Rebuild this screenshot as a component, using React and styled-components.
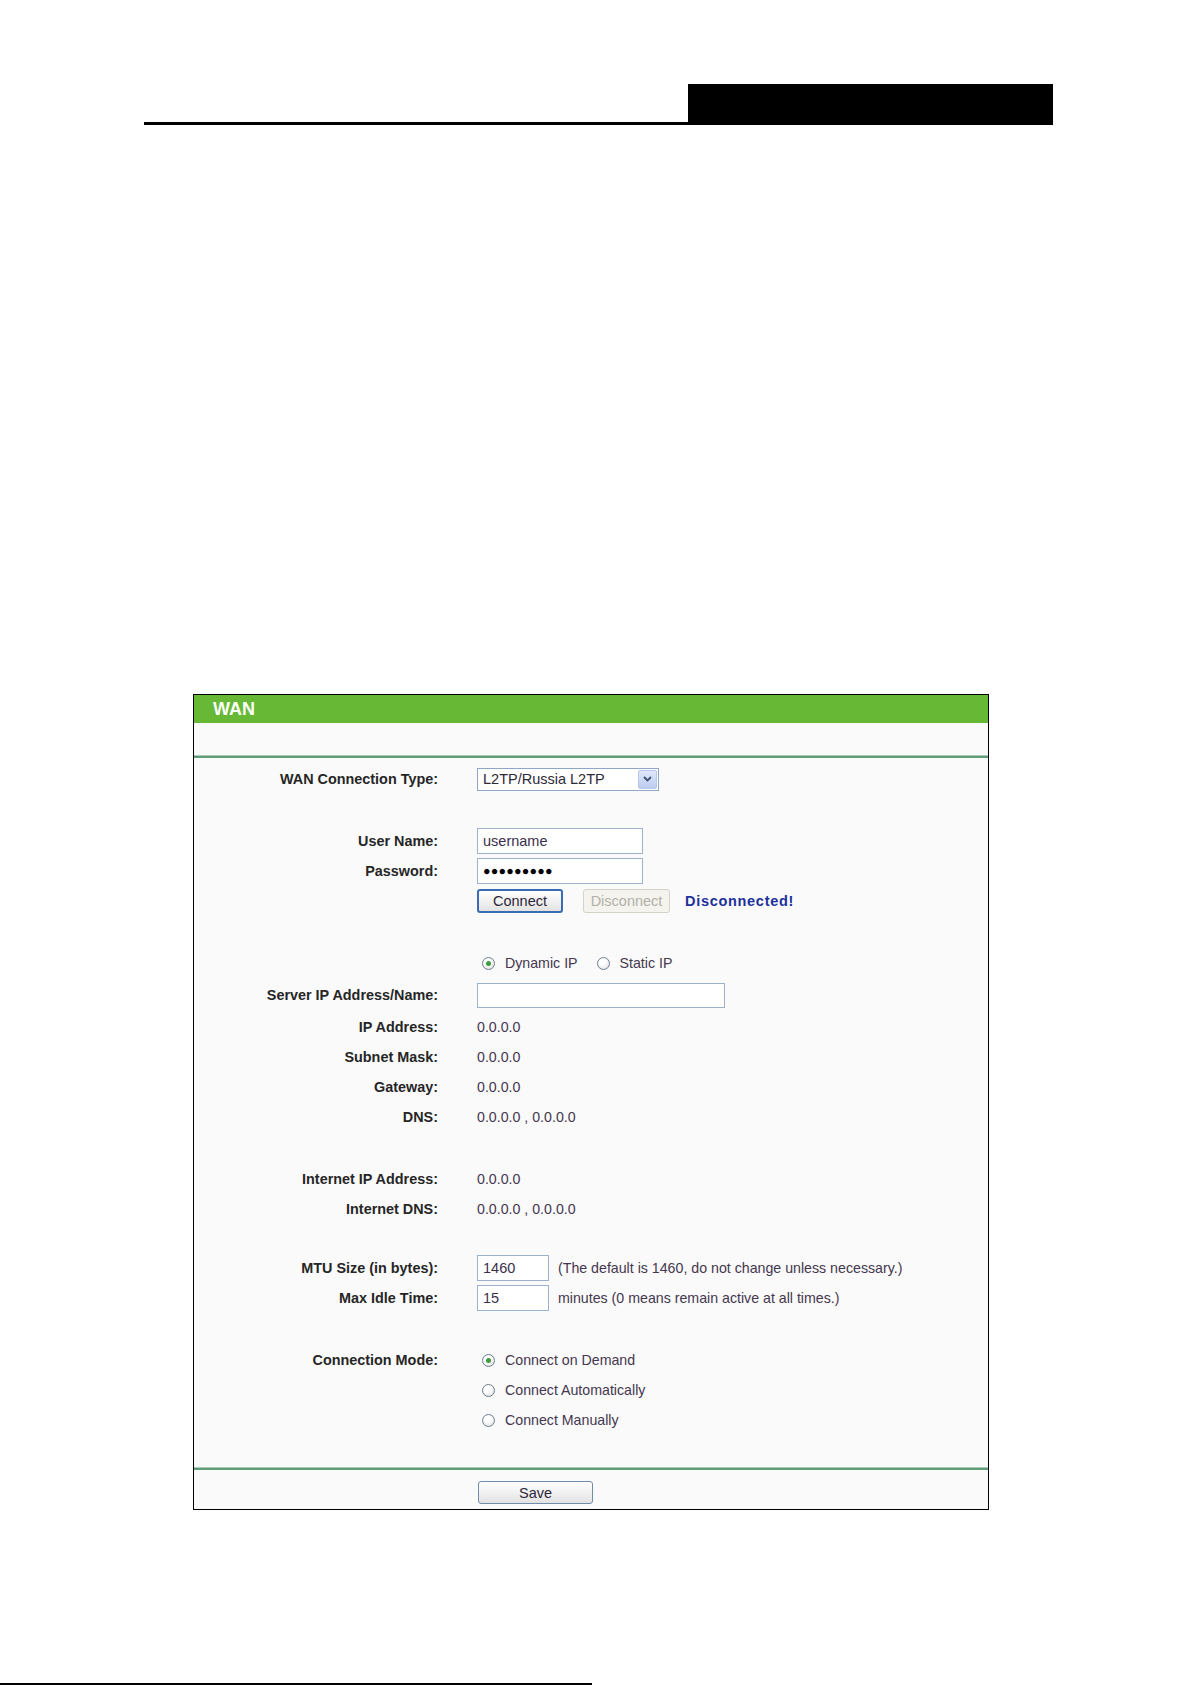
import React from "react";
import styled, { createGlobalStyle } from "styled-components";

const GlobalStyle = createGlobalStyle`
  html, body {
    margin: 0;
    padding: 0;
    background: #ffffff;
  }
  body {
    font-family: "Liberation Sans", Arial, sans-serif;
  }
`;

const Page = styled.div`
  width: 1191px;
  height: 1685px;
  display: flex;
  flex-direction: column;
  overflow: hidden;
  background: #fff;
`;

const TopBar = styled.div`
  display: flex;
  align-items: flex-end;
  margin: 84px 0 0 144px;
`;

const TopRule = styled.div`
  width: 544px;
  height: 3px;
  background: #000;
`;

const TopBlock = styled.div`
  width: 365px;
  height: 41px;
  background: #000;
`;

const Panel = styled.div`
  box-sizing: border-box;
  width: 796px;
  margin: 569px 0 0 193px;
  border: 1px solid #000;
  background: #fafafa;
`;

const Header = styled.div`
  height: 28px;
  line-height: 29px;
  padding-left: 19px;
  background: #67b834;
  color: #fff;
  font-size: 18px;
  font-weight: bold;
`;

const HeaderGap = styled.div`
  height: 32px;
`;

const Divider = styled.div`
  border-top: 1px solid #a9cab6;
  border-bottom: 2px solid #5f9d79;
`;

const Body = styled.div`
  padding: 6px 0 32px;
`;

const Row = styled.div`
  display: flex;
  align-items: center;
  height: ${(p) => p.$h || 30}px;
`;

const Spacer = styled.div`
  height: ${(p) => p.$h || 32}px;
`;

const Label = styled.div`
  flex-shrink: 0;
  width: 244px;
  text-align: right;
  font-size: 14.4px;
  font-weight: bold;
  color: #262626;
`;

const Value = styled.div`
  margin-left: 39px;
  display: flex;
  align-items: center;
  gap: ${(p) => p.$gap || 0}px;
  font-size: 14.2px;
  color: #45374f;
  white-space: nowrap;
`;

const TextInput = styled.input`
  box-sizing: border-box;
  width: ${(p) => p.$w}px;
  height: ${(p) => p.$hh || 26}px;
  margin: 0;
  padding: 0 5px;
  border: 1px solid #9db1cc;
  background: #fff;
  font-family: "Liberation Sans", Arial, sans-serif;
  font-size: ${(p) => (p.$dots ? 12.5 : 14.5)}px;
  letter-spacing: ${(p) => (p.$dots ? "0.2px" : "0")};
  color: ${(p) => (p.$dots ? "#000" : "#3b2f4a")};
  outline: none;
`;

const SelectBox = styled.div`
  box-sizing: border-box;
  width: 182px;
  height: 23px;
  display: flex;
  align-items: center;
  justify-content: space-between;
  padding: 0 1px 0 5px;
  border: 1px solid #8ea7c8;
  background: #fff;
  font-size: 14.5px;
  color: #2f2a38;
`;

const SelectArrow = styled.span`
  box-sizing: border-box;
  width: 19px;
  height: 19px;
  display: flex;
  align-items: center;
  justify-content: center;
  border: 1px solid #b7c6ea;
  border-radius: 2px;
  background: linear-gradient(#e1e8fb, #bccbf1);
`;

const Button = styled.button`
  box-sizing: border-box;
  width: ${(p) => p.$w}px;
  height: ${(p) => p.$hh || 24}px;
  margin: 0;
  padding: 0;
  border-radius: 3px;
  font-family: "Liberation Sans", Arial, sans-serif;
  font-size: 14.5px;
  cursor: default;
  border: ${(p) =>
    p.$focus ? "2px solid #3a6cb3" : p.disabled ? "1px solid #d5d2c6" : "1px solid #6f8cab"};
  background: ${(p) =>
    p.disabled ? "#f4f3ee" : "linear-gradient(#ffffff, #f0f0f0 55%, #e2e2e2)"};
  color: ${(p) => (p.disabled ? "#b3b0a8" : "#2d2638")};
`;

const Status = styled.span`
  font-size: 14.5px;
  font-weight: bold;
  letter-spacing: 0.7px;
  color: #1c319c;
`;

const RadioOption = styled.span`
  display: inline-flex;
  align-items: center;
  gap: 10px;
  margin-left: ${(p) => p.$ml ?? 5}px;
`;

const RadioDot = styled.span`
  box-sizing: border-box;
  width: 13px;
  height: 13px;
  border-radius: 50%;
  border: 1px solid #6f7f90;
  background: radial-gradient(circle at 40% 35%, #ffffff 30%, #d8d8d8 100%);
  display: inline-flex;
  align-items: center;
  justify-content: center;
  &::after {
    content: "";
    width: 5px;
    height: 5px;
    border-radius: 50%;
    background: ${(p) => (p.$on ? "#3c9b3c" : "transparent")};
  }
`;

const Note = styled.span`
  margin-left: 9px;
`;

const Footer = styled.div`
  height: 39px;
  padding: 11px 0 0 284px;
  box-sizing: border-box;
`;

const BottomLine = styled.div`
  width: 592px;
  height: 2px;
  margin-top: 173px;
  background: #000;
`;

const Radio = ({ on, ml, children }) => (
  <RadioOption $ml={ml}>
    <RadioDot $on={on} />
    {children}
  </RadioOption>
);

const Field = ({ label, h, gap, children }) => (
  <Row $h={h}>
    <Label>{label}</Label>
    <Value $gap={gap}>{children}</Value>
  </Row>
);

export default function App() {
  return (
    <>
      <GlobalStyle />
      <Page>
        <TopBar>
          <TopRule />
          <TopBlock />
        </TopBar>

        <Panel>
          <Header>WAN</Header>
          <HeaderGap />
          <Divider />
          <Body>
            <Field label="WAN Connection Type:">
              <SelectBox>
                L2TP/Russia L2TP
                <SelectArrow>
                  <svg width="9" height="6" viewBox="0 0 9 6">
                    <polyline points="1,1 4.5,4.5 8,1" fill="none" stroke="#3e4f72" strokeWidth="1.8" />
                  </svg>
                </SelectArrow>
              </SelectBox>
            </Field>
            <Spacer />
            <Field label="User Name:">
              <TextInput $w={166} defaultValue="username" />
            </Field>
            <Field label="Password:">
              <TextInput $w={166} $dots defaultValue="●●●●●●●●●" readOnly />
            </Field>
            <Field label="">
              <Button $w={86} $focus>Connect</Button>
              <span style={{ width: 20 }} />
              <Button $w={87} disabled>Disconnect</Button>
              <span style={{ width: 15 }} />
              <Status>Disconnected!</Status>
            </Field>
            <Spacer />
            <Field label="">
              <Radio on>Dynamic IP</Radio>
              <Radio ml={19}>Static IP</Radio>
            </Field>
            <Field label="Server IP Address/Name:" h={34}>
              <TextInput $w={248} $hh={25} defaultValue="" />
            </Field>
            <Field label="IP Address:">0.0.0.0</Field>
            <Field label="Subnet Mask:">0.0.0.0</Field>
            <Field label="Gateway:">0.0.0.0</Field>
            <Field label="DNS:">0.0.0.0 , 0.0.0.0</Field>
            <Spacer />
            <Field label="Internet IP Address:">0.0.0.0</Field>
            <Field label="Internet DNS:">0.0.0.0 , 0.0.0.0</Field>
            <Spacer $h={29} />
            <Field label="MTU Size (in bytes):">
              <TextInput $w={72} defaultValue="1460" />
              <Note>(The default is 1460, do not change unless necessary.)</Note>
            </Field>
            <Field label="Max Idle Time:">
              <TextInput $w={72} defaultValue="15" />
              <Note>minutes (0 means remain active at all times.)</Note>
            </Field>
            <Spacer />
            <Field label="Connection Mode:">
              <Radio on>Connect on Demand</Radio>
            </Field>
            <Field label="">
              <Radio>Connect Automatically</Radio>
            </Field>
            <Field label="">
              <Radio>Connect Manually</Radio>
            </Field>
          </Body>
          <Divider />
          <Footer>
            <Button $w={115} $hh={23}>Save</Button>
          </Footer>
        </Panel>

        <BottomLine />
      </Page>
    </>
  );
}
